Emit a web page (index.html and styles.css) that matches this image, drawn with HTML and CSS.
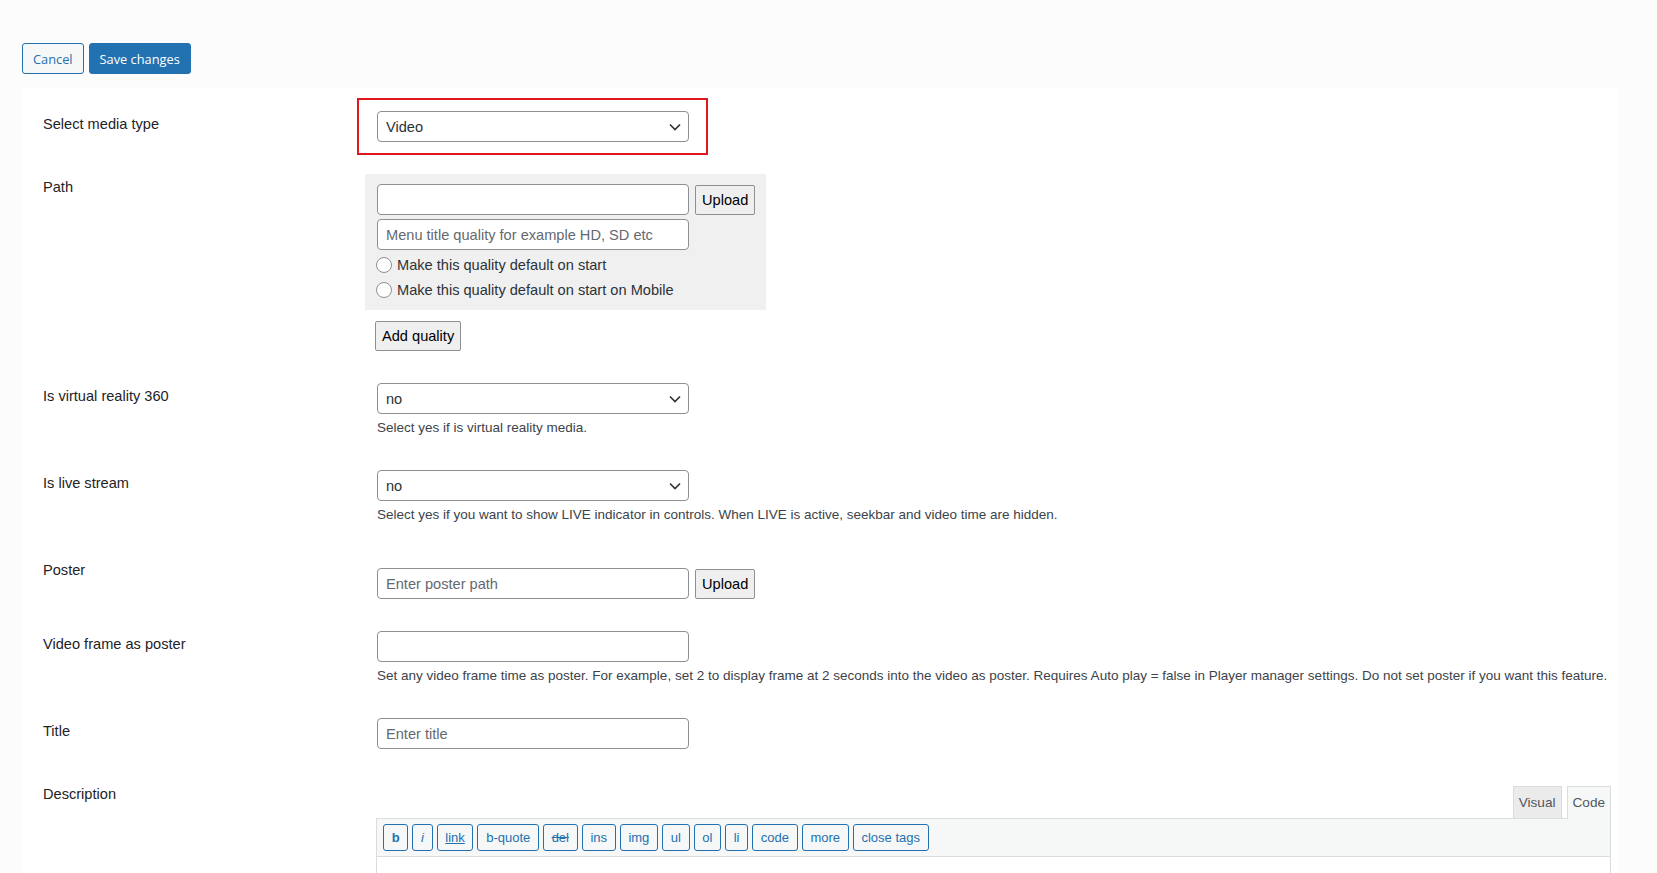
FILE: index.html
```html
<!DOCTYPE html>
<html lang="en">
<head>
    <meta charset="UTF-8">
    <title>Edit media</title>
    <link rel="stylesheet" href="styles.css">
</head>
<body>
    <div class="page">
        <div class="actions">
            <button class="btn btn-secondary">Cancel</button>
            <button class="btn btn-primary">Save changes</button>
        </div>

        <div class="card">
            <div class="row">
                <div class="label">Select media type</div>
                <div class="field">
                    <div class="highlight">
                        <div class="select-wrap">
                            <select class="select"><option>Video</option></select>
                            <svg class="chevron" width="12" height="8" viewBox="0 0 12 8"><polyline points="1,1.5 6,6.5 11,1.5" fill="none" stroke="#2c3338" stroke-width="1.6"/></svg>
                        </div>
                    </div>
                </div>
            </div>

            <div class="row">
                <div class="label">Path</div>
                <div class="field">
                    <div class="quality">
                        <div class="inline">
                            <input class="input" type="text">
                            <button class="plain-btn">Upload</button>
                        </div>
                        <input class="input input-menu" type="text" placeholder="Menu title quality for example HD, SD etc">
                        <div class="radios">
                            <label class="radio-line"><input class="radio" type="radio" name="q1">Make this quality default on start</label>
                            <label class="radio-line"><input class="radio" type="radio" name="q2">Make this quality default on start on Mobile</label>
                        </div>
                    </div>
                    <button class="plain-btn add-quality">Add quality</button>
                </div>
            </div>

            <div class="row">
                <div class="label">Is virtual reality 360</div>
                <div class="field">
                    <div class="select-wrap">
                        <select class="select"><option>no</option></select>
                        <svg class="chevron" width="12" height="8" viewBox="0 0 12 8"><polyline points="1,1.5 6,6.5 11,1.5" fill="none" stroke="#2c3338" stroke-width="1.6"/></svg>
                    </div>
                    <p class="desc">Select yes if is virtual reality media.</p>
                </div>
            </div>

            <div class="row">
                <div class="label">Is live stream</div>
                <div class="field">
                    <div class="select-wrap">
                        <select class="select"><option>no</option></select>
                        <svg class="chevron" width="12" height="8" viewBox="0 0 12 8"><polyline points="1,1.5 6,6.5 11,1.5" fill="none" stroke="#2c3338" stroke-width="1.6"/></svg>
                    </div>
                    <p class="desc">Select yes if you want to show LIVE indicator in controls. When LIVE is active, seekbar and video time are hidden.</p>
                </div>
            </div>

            <div class="row">
                <div class="label">Poster</div>
                <div class="field">
                    <div class="inline poster">
                        <input class="input" type="text" placeholder="Enter poster path">
                        <button class="plain-btn">Upload</button>
                    </div>
                </div>
            </div>

            <div class="row">
                <div class="label">Video frame as poster</div>
                <div class="field">
                    <input class="input" type="text">
                    <p class="desc">Set any video frame time as poster. For example, set 2 to display frame at 2 seconds into the video as poster. Requires Auto play = false in Player manager settings. Do not set poster if you want this feature.</p>
                </div>
            </div>

            <div class="row">
                <div class="label">Title</div>
                <div class="field">
                    <input class="input" type="text" placeholder="Enter title">
                </div>
            </div>

            <div class="row">
                <div class="label">Description</div>
                <div class="field">
                    <div class="editor">
                        <div class="tabs">
                            <span class="tab">Visual</span>
                            <span class="tab tab-active">Code</span>
                        </div>
                        <div class="toolbar">
                            <button class="qt qt-b">b</button>
                            <button class="qt qt-i">i</button>
                            <button class="qt qt-link">link</button>
                            <button class="qt">b-quote</button>
                            <button class="qt qt-del">del</button>
                            <button class="qt">ins</button>
                            <button class="qt">img</button>
                            <button class="qt">ul</button>
                            <button class="qt">ol</button>
                            <button class="qt">li</button>
                            <button class="qt">code</button>
                            <button class="qt">more</button>
                            <button class="qt">close tags</button>
                        </div>
                        <div class="editor-area"></div>
                    </div>
                </div>
            </div>
        </div>
    </div>
</body>
</html>
```

FILE: styles.css
```css
html, body {
    margin: 0;
    background: #fcfcfc;
    font-family: "Liberation Sans", Arial, sans-serif;
    color: #1d2327;
    overflow: hidden;
}
.page {
    padding: 43px 39px 0 22px;
}
.actions {
    display: flex;
    gap: 5px;
}
.btn {
    height: 31px;
    padding: 0 10px;
    font-family: "Open Sans", sans-serif;
    font-size: 12.8px;
    border: 1px solid #2271b1;
    border-radius: 3px;
    cursor: pointer;
}
.btn-secondary { background: #f6f7f7; color: #2271b1; }
.btn-primary { background: #2271b1; color: #fff; }

.card {
    margin-top: 14px;
    padding-top: 7px;
    background: #fff;
    min-height: 900px;
}
.row {
    display: grid;
    grid-template-columns: 334px 1fr;
    padding: 16px 7px 16px 21px;
}
.label {
    font-size: 14.6px;
    line-height: 20px;
    padding-top: 3px;
    color: #1d2327;
}
.field {
    min-width: 0;
}

.highlight {
    width: fit-content;
    margin: -13px 0 -13px -20px;
    padding: 11px 17px 11px 18px;
    border: 2px solid #e1171e;
}

.select-wrap {
    position: relative;
    width: 312px;
}
.select {
    display: block;
    width: 312px;
    height: 31px;
    padding: 0 30px 0 8px;
    font-family: inherit;
    font-size: 14.6px;
    color: #2c3338;
    background: #fff;
    border: 1px solid #8c8f94;
    border-radius: 4px;
    appearance: none;
}
.chevron {
    position: absolute;
    right: 8px;
    top: 12px;
}

.input {
    display: block;
    box-sizing: border-box;
    width: 312px;
    height: 31px;
    padding: 0 8px;
    font-family: inherit;
    font-size: 14.6px;
    color: #2c3338;
    background: #fff;
    border: 1px solid #8c8f94;
    border-radius: 4px;
}
.input::placeholder { color: #646970; }

.inline {
    display: flex;
    align-items: center;
    gap: 6px;
}
.plain-btn {
    height: 30px;
    padding: 0 6px;
    font-family: inherit;
    font-size: 14.6px;
    color: #000;
    background: #efefef;
    border: 1px solid #8f8f8f;
    border-radius: 2px;
}

.quality {
    width: fit-content;
    margin-left: -12px;
    padding: 10px 11px 8px 12px;
    background: #f0f0f0;
}
.input-menu {
    margin-top: 4px;
}
.radios {
    margin-top: 2px;
}
.radio-line {
    display: flex;
    align-items: center;
    gap: 5px;
    height: 25px;
    margin-left: -1px;
    font-size: 14.6px;
    color: #2c3338;
}
.radio {
    appearance: none;
    width: 16px;
    height: 16px;
    margin: 0;
    border: 1px solid #8c8f94;
    border-radius: 50%;
    background: #fff;
}
.add-quality {
    margin-top: 11px;
    margin-left: -2px;
}

.desc {
    margin: 4px 0 0;
    font-size: 13.5px;
    line-height: 20px;
    color: #3c434a;
    white-space: nowrap;
}

.poster {
    margin-top: 11px;
}

.editor {
    margin-top: 5px;
    margin-left: -1px;
}
.tabs {
    display: flex;
    justify-content: flex-end;
    gap: 5px;
}
.tab {
    height: 31px;
    line-height: 31px;
    padding: 0 5px;
    font-size: 13.6px;
    color: #50575e;
    background: #ebebeb;
    border: 1px solid #dcdcde;
    border-bottom: none;
}
.tab-active {
    position: relative;
    z-index: 1;
    height: 32px;
    margin-bottom: -1px;
    background: #f6f7f7;
}
.toolbar {
    display: flex;
    flex-wrap: wrap;
    padding: 3px 4px;
    background: #f6f7f7;
    border: 1px solid #dcdcde;
}
.qt {
    height: 27px;
    margin: 2px;
    padding: 0 7.7px;
    font-family: inherit;
    font-size: 13px;
    color: #2271b1;
    background: #f6f7f7;
    border: 1px solid #2271b1;
    border-radius: 3px;
}
.qt-b { font-weight: bold; }
.qt-i { font-style: italic; }
.qt-link { text-decoration: underline; }
.qt-del { text-decoration: line-through; }
.editor-area {
    height: 240px;
    background: #fff;
    border: 1px solid #dcdcde;
    border-top: none;
}
```
